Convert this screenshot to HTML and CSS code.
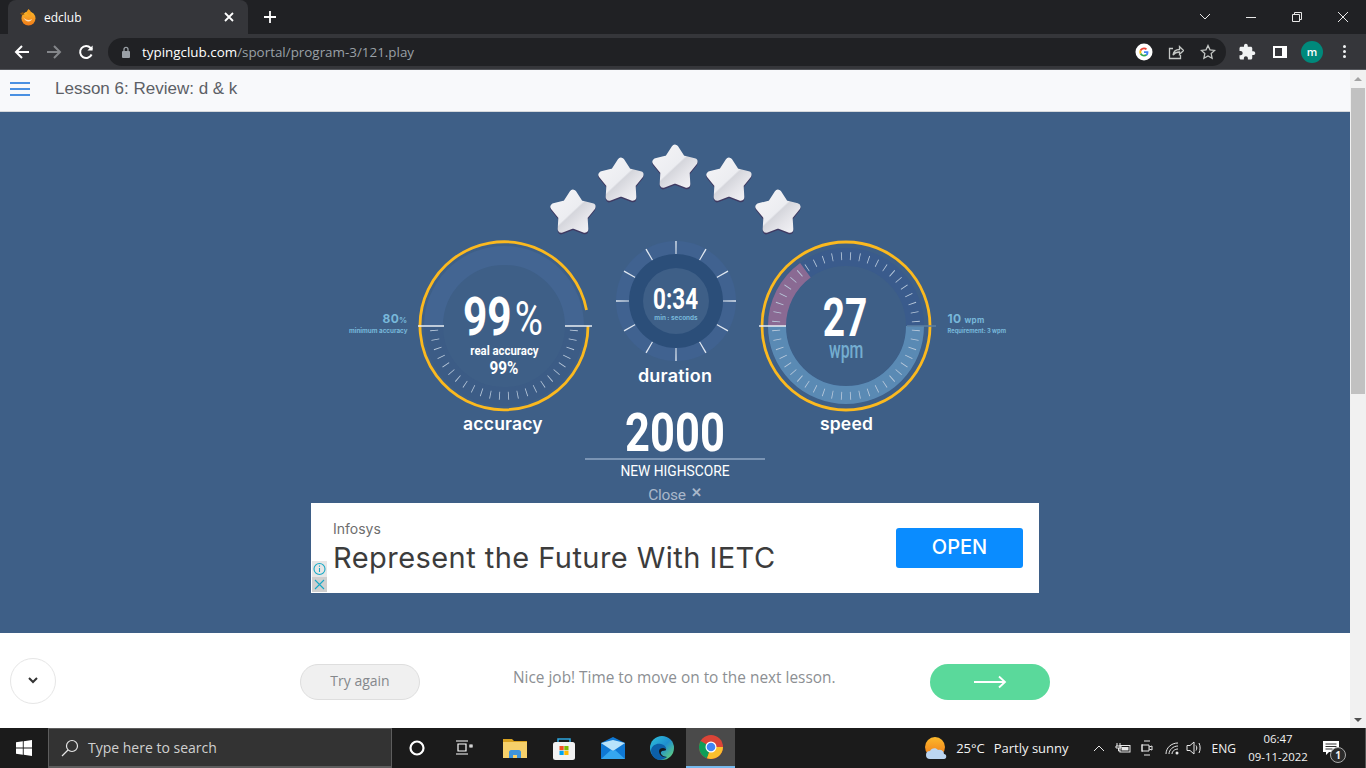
FILE: index.html
```html
<!DOCTYPE html>
<html>
  <head>
    <meta charset="utf-8" />
    <title>edclub</title>
    <link rel="stylesheet" href="styles.css">
  </head>
  <body>
    <svg class="defs" width="0" height="0">
      <defs>
        <linearGradient id="starFill" gradientUnits="userSpaceOnUse" x1="10" y1="10" x2="38" y2="40">
          <stop offset="0" stop-color="#f2f2f5" />
          <stop offset="0.46" stop-color="#ecedf1" />
          <stop offset="0.5" stop-color="#d5d6dc" />
          <stop offset="0.75" stop-color="#e4e4e9" />
          <stop offset="1" stop-color="#efeff3" />
        </linearGradient>
        <linearGradient id="edgeFill" x1="0" y1="0" x2="1" y2="1">
          <stop offset="0" stop-color="#2fc2d8" />
          <stop offset="0.5" stop-color="#1f8fd0" />
          <stop offset="1" stop-color="#6fdc6a" />
        </linearGradient>
        <linearGradient id="sunFill" x1="0" y1="0" x2="0" y2="1">
          <stop offset="0" stop-color="#fbb92c" />
          <stop offset="1" stop-color="#f07a18" />
        </linearGradient>
        <symbol id="star" viewBox="0 0 48 48">
          <polygon class="star-shadow" points="24,7.500 30.500,17.600 42.100,20.600 34.500,29.900 35.200,41.900 24,37.500 12.800,41.900 13.500,29.900 5.900,20.600 17.500,17.600" />
          <polygon class="star-face" points="24,6 30.500,16.100 42.100,19.100 34.500,28.400 35.200,40.400 24,36 12.800,40.400 13.500,28.400 5.900,19.100 17.500,16.100" />
        </symbol>
      </defs>
    </svg>

    <div class="tabstrip">
      <div class="tab">
        <svg class="favicon" width="18" height="18" viewBox="0 0 18 18">
          <circle cx="9.500" cy="10.500" r="7" fill="url(#sunFill)" />
          <path d="M9.500 1c2.500 2 3.500 4 2.500 7-1-1-3-1-4.500-3 0-1 1-3 2-4z" fill="#f7a11d" />
          <path d="M1 5.500l3-1.500 1.500 2.500-3 .5z" fill="#8a5512" />
          <path d="M4 9c2 3 6 4 9 2-1 3-6 4-9-2z" fill="#fff" opacity="0.75" />
        </svg>
        <span class="tab-title">edclub</span>
        <svg class="tab-close" width="10" height="10" viewBox="0 0 10 10"><path d="M1 1l8 8M9 1l-8 8" /></svg>
      </div>
      <svg class="new-tab" width="14" height="14" viewBox="0 0 14 14"><path d="M7 1v12M1 7h12" /></svg>
      <div class="window-controls">
        <svg width="12" height="8" viewBox="0 0 12 8"><path d="M1 1l5 5 5-5" /></svg>
        <svg width="12" height="12" viewBox="0 0 12 12"><path d="M1 6.500h10" /></svg>
        <svg width="12" height="12" viewBox="0 0 12 12"><path d="M1.500 3.500h7v7h-7zM3.500 3.500v-2h7v7h-2" /></svg>
        <svg width="12" height="12" viewBox="0 0 12 12"><path d="M1 1l10 10M11 1L1 11" /></svg>
      </div>
    </div>

    <div class="toolbar">
      <svg class="nav-icon" width="16" height="16" viewBox="0 0 16 16"><path d="M15 8H2M8 2L2 8l6 6" /></svg>
      <svg class="nav-icon nav-off" width="16" height="16" viewBox="0 0 16 16"><path d="M1 8h13M8 2l6 6-6 6" /></svg>
      <svg class="nav-icon" width="16" height="16" viewBox="0 0 16 16"><path d="M13.600 10.500A6 6 0 1 1 12.600 4L14 5.500" /><path class="nav-solid" d="M14.600 1.400v5.200H9.400z" /></svg>
      <div class="omnibox">
        <svg class="lock" width="10" height="12" viewBox="0 0 10 12"><rect x="1" y="5" width="8" height="7" rx="1" /><path d="M3 5V3.400a2 2 0 0 1 4 0V5" /></svg>
        <span class="url"><span class="url-host">typingclub.com</span>/sportal/program-3/121.play</span>
        <svg class="omni-g" width="18" height="18" viewBox="0 0 18 18">
          <circle cx="9" cy="9" r="8.500" fill="#fff" />
          <path d="M13.400 9.200c0-.4 0-.7-.1-1H9v1.900h2.500c-.1.600-.4 1.100-.9 1.400l1.500 1.100c.9-.8 1.300-2 1.300-3.400z" fill="#4285f4" />
          <path d="M9 13.500c1.200 0 2.300-.4 3.100-1.100l-1.500-1.100c-.4.300-1 .5-1.600.5-1.200 0-2.200-.8-2.600-1.900L4.800 11c.8 1.500 2.400 2.500 4.200 2.500z" fill="#34a853" />
          <path d="M6.400 9.900c-.2-.6-.2-1.200 0-1.800L4.800 6.900c-.6 1.300-.6 2.800 0 4.100z" fill="#fbbc05" />
          <path d="M9 6.300c.7 0 1.300.2 1.800.7l1.300-1.300C11.300 4.900 10.200 4.500 9 4.500c-1.800 0-3.400 1-4.200 2.400l1.600 1.200C6.800 7.100 7.800 6.300 9 6.300z" fill="#ea4335" />
        </svg>
        <svg class="omni-icon" width="16" height="16" viewBox="0 0 16 16"><path d="M5 4.500H1.500v10h11V11M5 11c.5-3.500 3-5.500 6.500-5.500V2.500l4 4-4 4V8C9 8 6.500 9 5 11z" /></svg>
        <svg class="omni-icon" width="16" height="16" viewBox="0 0 16 16"><path d="M8 1.500l2 4.300 4.700.6-3.500 3.200.9 4.700L8 12l-4.100 2.300.9-4.700L1.300 6.400 6 5.800z" /></svg>
      </div>
      <svg class="tool-icon" width="18" height="18" viewBox="0 0 24 24"><path d="M20.500 11H19V7c0-1.100-.9-2-2-2h-4V3.500C13 2.120 11.880 1 10.500 1S8 2.120 8 3.500V5H4c-1.100 0-1.990.9-1.990 2v3.800H3.500c1.490 0 2.700 1.210 2.700 2.700s-1.210 2.700-2.700 2.700H2V20c0 1.100.9 2 2 2h3.800v-1.500c0-1.490 1.210-2.700 2.700-2.700 1.490 0 2.700 1.210 2.700 2.700V22H17c1.100 0 2-.9 2-2v-4h1.500c1.380 0 2.500-1.120 2.500-2.500S21.880 11 20.500 11z" /></svg>
      <div class="side-panel"></div>
      <div class="avatar">m</div>
      <div class="menu-dots"><i></i><i></i><i></i></div>
    </div>

    <div class="window">
      <div class="page">
        <div class="lesson-bar">
          <div class="burger"><i></i><i></i><i></i></div>
          <span class="lesson-title">Lesson 6: Review: d &amp; k</span>
        </div>

        <div class="results">
          <div class="stars">
            <svg class="star star-low"><use href="#star" /></svg>
            <svg class="star star-mid"><use href="#star" /></svg>
            <svg class="star"><use href="#star" /></svg>
            <svg class="star star-mid"><use href="#star" /></svg>
            <svg class="star star-low"><use href="#star" /></svg>
          </div>

          <div class="gauges">
            <div class="gauge">
              <div class="dial">
                <svg class="dial-svg" width="171" height="171" viewBox="0 0 171 171">
                  <path class="band-accuracy-top" d="M14.500 85A70.500 70.500 0 0 1 155.500 85" />
                  <path class="band-accuracy-low" d="M155.500 85A70.500 70.500 0 0 1 14.500 85" />
                  <path class="ticks" pathLength="24" d="M155 85A70 70 0 0 1 15 85" />
                  <path class="rim" d="M167.500 69A84 84 0 1 0 169 85" />
                  <path class="mark" d="M-1 85H25M146 85H173" />
                </svg>
                <div class="note note-left">
                  <div class="note-big">80<small>%</small></div>
                  <div class="note-small">minimum accuracy</div>
                </div>
                <div class="readout readout-accuracy">
                  <div class="big-number">99<span class="percent">%</span></div>
                  <div class="real-label">real accuracy</div>
                  <div class="real-value">99%</div>
                </div>
              </div>
              <div class="gauge-label gauge-label-accuracy">accuracy</div>
            </div>

            <div class="gauge">
              <div class="dial dial-time">
                <svg class="dial-svg" width="124" height="122" viewBox="0 0 124 122">
                  <circle class="time-outer" cx="63" cy="60" r="60" />
                  <circle class="time-ticks" pathLength="12" cx="63" cy="60" r="53.500" />
                  <circle class="time-ring" cx="63" cy="60" r="47" />
                  <circle class="time-inner" cx="63" cy="60" r="33" />
                </svg>
                <div class="readout readout-time">
                  <div class="time-number">0:34</div>
                  <div class="time-unit">min : seconds</div>
                </div>
              </div>
              <div class="gauge-label gauge-label-time">duration</div>
              <div class="highscore">
                <div class="highscore-box"><div class="highscore-number">2000</div></div>
                <div class="highscore-label">NEW HIGHSCORE</div>
              </div>
              <div class="close-row"><span class="close-text">Close</span><span class="close-x">✕</span></div>
            </div>

            <div class="gauge">
              <div class="dial">
                <svg class="dial-svg" width="171" height="171" viewBox="0 0 171 171">
                  <circle class="band-speed" cx="85" cy="85" r="69" />
                  <path class="band-speed-low" d="M154 85A69 69 0 0 1 16 85" />
                  <path class="band-speed-red" d="M16 85A69 69 0 0 1 44.400 29.200" />
                  <circle class="ticks" pathLength="48" cx="85" cy="85" r="70" />
                  <circle class="rim" cx="85" cy="85" r="84" />
                  <path class="mark" d="M-2 85H25" />
                  <path class="mark mark-faint" d="M146 85H175" />
                </svg>
                <div class="readout readout-speed">
                  <div class="speed-number">27</div>
                  <div class="speed-unit">wpm</div>
                </div>
                <div class="note note-right">
                  <div class="note-big">10 <small>wpm</small></div>
                  <div class="note-small">Requirement: 3 wpm</div>
                </div>
              </div>
              <div class="gauge-label gauge-label-speed">speed</div>
            </div>
          </div>

          <div class="ad">
            <div class="ad-copy">
              <div class="ad-brand">Infosys</div>
              <div class="ad-headline">Represent the Future With IETC</div>
            </div>
            <div class="ad-button">OPEN</div>
            <div class="ad-badges">
              <svg width="15" height="16" viewBox="0 0 15 16"><circle cx="7.500" cy="8" r="5.500" /><path d="M7.500 7v4M7.500 4.500v1.200" /></svg>
              <svg class="ad-badge-x" width="15" height="15" viewBox="0 0 15 15"><path d="M3 3l9 9M12 3l-9 9" /></svg>
            </div>
          </div>
        </div>

        <div class="actions">
          <div class="collapse">
            <svg width="10" height="7" viewBox="0 0 10 7"><path d="M1 1l4 4 4-4" /></svg>
          </div>
          <div class="try-again">Try again</div>
          <div class="message">Nice job! Time to move on to the next lesson.</div>
          <div class="next">
            <svg width="34" height="14" viewBox="0 0 34 14"><path d="M1 7h31M26 1.500L32 7l-6 5.500" /></svg>
          </div>
        </div>
      </div>

      <div class="scrollbar">
        <div class="scroll-up"></div>
        <div class="scroll-thumb"></div>
        <div class="scroll-down"></div>
      </div>
    </div>

    <div class="taskbar">
      <div class="start">
        <svg width="16" height="16" viewBox="0 0 16 16"><path d="M0 2.300L6.800 1.300V7.600H0zM7.700 1.200L16 0V7.600H7.700zM0 8.400H6.800V14.700L0 13.700zM7.700 8.400H16V16L7.700 14.800z" /></svg>
      </div>
      <div class="search">
        <svg width="20" height="20" viewBox="0 0 20 20"><circle cx="12" cy="8" r="5.500" /><path d="M8 12l-6 6" /></svg>
        <span>Type here to search</span>
      </div>
      <div class="task-item">
        <svg width="18" height="18" viewBox="0 0 18 18"><circle cx="9" cy="9" r="6.500" fill="none" stroke="#fff" stroke-width="2.200" /></svg>
      </div>
      <div class="task-item">
        <svg class="task-view" width="18" height="16" viewBox="0 0 18 16"><path d="M1 1h12M3 4h8v7H3zM1 14h12M15 5h2v2h-2z" /></svg>
      </div>
      <div class="task-item">
        <svg width="24" height="20" viewBox="0 0 24 20">
          <path d="M0 1h9l2 2h13v3H0z" fill="#d9a220" />
          <path d="M0 4h24v16H0z" fill="#f6d06a" />
          <path d="M6 20v-6c0-1 1-2 2-2h8c1 0 2 1 2 2v6h-4v-3h-4v3z" fill="#3f94dc" />
        </svg>
      </div>
      <div class="task-item">
        <svg width="24" height="24" viewBox="0 0 24 24">
          <path d="M6 7V3h12v4" fill="none" stroke="#2ea7e0" stroke-width="1.500" />
          <rect x="1" y="6" width="22" height="18" rx="2.500" fill="#f2f2f2" />
          <rect x="7.500" y="10" width="4.200" height="4.200" fill="#f25022" />
          <rect x="12.300" y="10" width="4.200" height="4.200" fill="#7fba00" />
          <rect x="7.500" y="14.800" width="4.200" height="4.200" fill="#00a4ef" />
          <rect x="12.300" y="14.800" width="4.200" height="4.200" fill="#ffb900" />
        </svg>
      </div>
      <div class="task-item">
        <svg width="24" height="22" viewBox="0 0 24 22">
          <path d="M0 6l12-6 12 6v16H0z" fill="#0f78d4" />
          <path d="M0 6l12 8 12-8-12-3z" fill="#b9e3fb" />
          <path d="M0 22l10-9 2 1 2-1 10 9z" fill="#35a6ef" />
        </svg>
      </div>
      <div class="task-item">
        <svg width="24" height="24" viewBox="0 0 24 24">
          <circle cx="12" cy="12" r="12" fill="url(#edgeFill)" />
          <path d="M1 14c1-5 6-7 10-6 4 1 6 4 5 6-1 1-4 0-5 2s2 5 6 5c-2 2-5 3-8 3-5-1-8-5-8-10z" fill="#0c5fa8" />
          <path d="M9 15c0-2 2-3 4-3s3 1 3 2c-1 1-4 0-5 2s2 5 6 5c-4 1-8-2-8-6z" fill="#18181a" />
        </svg>
      </div>
      <div class="task-item task-active">
        <svg width="24" height="24" viewBox="0 0 24 24">
          <circle cx="12" cy="12" r="12" fill="#db4437" />
          <path d="M12 12L1.600 6A12 12 0 0 0 8 23.300z" fill="#0f9d58" />
          <path d="M12 12h12A12 12 0 0 1 8 23.300z" fill="#fbc02d" />
          <circle cx="12" cy="12" r="5.500" fill="#fff" />
          <circle cx="12" cy="12" r="4.300" fill="#4285f4" />
        </svg>
      </div>

      <div class="tray">
        <svg class="weather" width="24" height="24" viewBox="0 0 24 24">
          <circle cx="11" cy="11" r="10" fill="url(#sunFill)" />
          <path d="M6 23a4 4 0 0 1 0-8c1-3 6-4 8-1 3-1 6 1 6 4 3 0 3 5 0 5z" fill="#bcd5f0" />
        </svg>
        <span class="tray-temp">25°C</span>
        <span class="tray-forecast">Partly sunny</span>
        <svg class="tray-chevron" width="12" height="8" viewBox="0 0 12 8"><path d="M1 7l5-5 5 5" /></svg>
        <svg class="tray-battery" width="16" height="12" viewBox="0 0 16 12"><path d="M2 1v3M5 1v3M1 4h5v2H1zM3.500 6v3H5" /><rect x="5" y="3.500" width="10" height="6.500" /><rect class="tray-fill" x="6.500" y="5" width="7" height="3.500" /></svg>
        <svg class="tray-camera" width="12" height="16" viewBox="0 0 12 16"><path d="M3 1h6M3 15h6M1 4v8M1 5h7v6H1zM8 7l3-1v4l-3-1" /></svg>
        <svg class="tray-wifi" width="16" height="16" viewBox="0 0 16 16"><path d="M1 14C1 8 6 3 13 3M4 14c0-4 4-8 9-8M7 14c0-3 3-5 6-5" /><circle cx="12" cy="13" r="1.500" /></svg>
        <svg class="tray-volume" width="16" height="16" viewBox="0 0 16 16"><path d="M1 5.500h3l4-3.500v12l-4-3.500H1zM10 5.500c1 1.500 1 3.500 0 5M13 3c1.500 3 1.500 7 0 10" /></svg>
        <span class="tray-lang">ENG</span>
        <div class="tray-clock">
          <div>06:47</div>
          <div>09-11-2022</div>
        </div>
        <div class="tray-notify">
          <svg width="16" height="15" viewBox="0 0 16 15"><path d="M0 0h16v11H6l-3 3v-3H0z" fill="#fff" /><path d="M2.500 3h11M2.500 5.500h11M2.500 8h7" stroke="#333" fill="none" /></svg>
          <span class="notify-count">1</span>
        </div>
      </div>
    </div>
  </body>
</html>
```

FILE: styles.css
```css
:root {
  --results-bg: #3e5f87;
  --rim: #fbb91f;
  --note: #78b8da;
  --chrome-dark: #202124;
  --chrome-mid: #35363a;
  --narrow: "Roboto", sans-serif;
  --ui: "Open Sans", "Noto Sans", sans-serif;
  --rounded: "Inter", "Open Sans", sans-serif;
}

* {
  box-sizing: border-box;
}
body {
  width: 1366px;
  height: 768px;
  margin: 0;
  overflow: hidden;
  display: flex;
  flex-direction: column;
  font-family: var(--ui);
  background: #fff;
}
.defs {
  position: absolute;
}

/* browser chrome */
.tabstrip {
  height: 34px;
  flex: none;
  display: flex;
  align-items: center;
  padding-left: 8px;
  background: var(--chrome-dark);
}
.tab {
  width: 240px;
  height: 34px;
  display: flex;
  align-items: center;
  padding: 0 14px 0 11px;
  border-radius: 8px 8px 0 0;
  background: var(--chrome-mid);
  color: #fff;
  font-size: 12px;
}
.tab-title {
  margin-left: 7px;
  flex: 1;
}
.tab-close path,
.new-tab path {
  stroke: #fff;
  stroke-width: 1.800;
  fill: none;
}
.new-tab {
  margin-left: 15px;
}
.window-controls {
  margin-left: auto;
  display: flex;
  align-items: center;
  gap: 34px;
  padding-right: 17px;
}
.window-controls svg {
  overflow: visible;
}
.window-controls path {
  stroke: #e8e8e8;
  fill: none;
}
.toolbar {
  height: 36px;
  flex: none;
  display: flex;
  align-items: center;
  padding: 0 0 0 14px;
  background: var(--chrome-mid);
  border-bottom: 1px solid #55575c;
}
.nav-icon {
  margin-right: 16px;
}
.nav-icon path {
  stroke: #fff;
  stroke-width: 2;
  fill: none;
}
.nav-icon path.nav-solid {
  fill: #fff;
  stroke: none;
}
.nav-icon.nav-off path {
  stroke: #84868a;
}
.omnibox {
  width: 1118px;
  height: 28px;
  margin-left: -2px;
  display: flex;
  align-items: center;
  padding: 0 10px 0 13px;
  border-radius: 14px;
  background: var(--chrome-dark);
}
.lock rect {
  fill: #9aa0a6;
}
.lock path {
  fill: none;
  stroke: #9aa0a6;
  stroke-width: 1.300;
}
.url {
  margin-left: 11px;
  flex: 1;
  font-size: 13.400px;
  color: #9aa0a6;
}
.url-host {
  color: #fff;
}
.omni-g {
  margin-right: 15px;
}
.omni-icon + .omni-icon {
  margin-left: 16px;
}
.omni-icon path {
  fill: none;
  stroke: #c4c7c5;
  stroke-width: 1.300;
}
.tool-icon {
  margin-left: 12px;
}
.tool-icon path {
  fill: #f1f3f4;
}
.side-panel {
  width: 14px;
  height: 12px;
  margin-left: 17px;
  border: 2px solid #fff;
  border-right-width: 5px;
  background: var(--chrome-mid);
}
.avatar {
  width: 22px;
  height: 22px;
  margin-left: 14px;
  border-radius: 50%;
  background: #00897b;
  color: #fff;
  font-size: 11px;
  font-weight: 600;
  line-height: 21px;
  text-align: center;
}
.menu-dots {
  margin-left: 20px;
  display: flex;
  flex-direction: column;
  gap: 2px;
}
.menu-dots i {
  width: 3px;
  height: 3px;
  border-radius: 50%;
  background: #f1f3f4;
}

/* page */
.window {
  flex: 1;
  display: flex;
  min-height: 0;
}
.page {
  width: 1350px;
  display: flex;
  flex-direction: column;
}
.lesson-bar {
  height: 42px;
  flex: none;
  display: flex;
  align-items: center;
  padding: 0 0 4px 10px;
  background: #f8f9fb;
  border-bottom: 1px solid #d5d8dc;
}
.burger {
  width: 20px;
  display: flex;
  flex-direction: column;
  gap: 4px;
}
.burger i {
  height: 2px;
  background: #4a90e2;
}
.lesson-title {
  margin-left: 25px;
  font-family: "Liberation Sans", sans-serif;
  font-size: 17px;
  color: #5c6066;
}
.results {
  flex: 1;
  display: flex;
  flex-direction: column;
  align-items: center;
  padding-top: 30px;
  background: var(--results-bg);
}
.stars {
  display: flex;
  gap: 4px;
  height: 95px;
}
.star {
  width: 50px;
  height: 50px;
}
.star-low {
  margin: 45px -5.500px 0;
}
.star-mid {
  margin-top: 13px;
}
.star-shadow {
  fill: #3f3a62;
  stroke: #3f3a62;
  stroke-width: 7;
  stroke-linejoin: round;
}
.star-face {
  fill: url(#starFill);
  stroke: url(#starFill);
  stroke-width: 7;
  stroke-linejoin: round;
}
.gauges {
  display: flex;
  margin-top: 4px;
}
.gauge {
  width: 171px;
  display: flex;
  flex-direction: column;
  align-items: center;
}
.dial {
  position: relative;
  width: 171px;
  height: 171px;
}
.dial-time {
  width: 124px;
  height: 122px;
}
.dial-svg {
  display: block;
  overflow: visible;
}
.band-accuracy-top {
  fill: none;
  stroke: #436592;
  stroke-width: 19;
}
.band-accuracy-low {
  fill: none;
  stroke: #3c5c86;
  stroke-width: 19;
}
.ticks {
  fill: none;
  stroke: #b9c9db;
  stroke-width: 8;
  stroke-dasharray: 0.09 0.91;
  stroke-dashoffset: -0.455;
}
.rim {
  fill: none;
  stroke: var(--rim);
  stroke-width: 2.800;
}
.mark {
  fill: none;
  stroke: #e9eef3;
  stroke-width: 1.500;
}
.mark-faint {
  stroke: #5b7fa3;
}
.band-speed {
  fill: none;
  stroke: #3a5b8c;
  stroke-width: 18;
}
.band-speed-low {
  fill: none;
  stroke: #5a8ab4;
  stroke-width: 18;
}
.band-speed-red {
  fill: none;
  stroke: #8a6a93;
  stroke-width: 18;
}
.time-outer {
  fill: #406290;
}
.time-ticks {
  fill: none;
  stroke: #dfe7f0;
  stroke-width: 13;
  stroke-dasharray: 0.045 0.955;
  stroke-dashoffset: 0.0225;
}
.time-ring {
  fill: #2b4e79;
}
.time-inner {
  fill: #3e5f87;
}
.readout {
  position: absolute;
  left: 0;
  right: 0;
  display: flex;
  flex-direction: column;
  align-items: center;
  color: #fff;
  font-family: var(--narrow);
}
.readout-accuracy {
  top: 52px;
}
.big-number {
  margin-right: 2px;
  font-size: 53px;
  font-weight: 700;
  line-height: 48px;
  transform: scaleX(0.8);
}
.percent {
  margin-left: 4px;
  font-size: 48px;
  font-weight: 400;
}
.real-label {
  margin-top: 1px;
  font-size: 12.500px;
  font-weight: 700;
  line-height: 14px;
  transform: scaleX(0.91);
}
.real-value {
  font-size: 18px;
  font-weight: 700;
  line-height: 20px;
  transform: scaleX(0.85);
}
.readout-speed {
  top: 49px;
}
.speed-number {
  margin-right: 2px;
  font-size: 54px;
  font-weight: 700;
  line-height: 56px;
  transform: scaleX(0.72);
}
.speed-unit {
  margin-top: -8px;
  font-size: 24px;
  font-weight: 500;
  line-height: 24px;
  color: #74add0;
  transform: scaleX(0.66);
}
.readout-time {
  top: 43px;
  padding-left: 2px;
}
.time-number {
  font-size: 29.500px;
  font-weight: 700;
  line-height: 30px;
  transform: scaleX(0.76);
}
.time-unit {
  font-family: var(--rounded);
  font-size: 6.400px;
  font-weight: 700;
  line-height: 8px;
  color: var(--note);
}
.note {
  position: absolute;
  top: 71px;
  font-family: var(--rounded);
  color: var(--note);
  white-space: nowrap;
}
.note-left {
  right: calc(100% + 11px);
  text-align: right;
}
.note-right {
  left: calc(100% + 16px);
}
.note-big {
  font-size: 12px;
  font-weight: 700;
  line-height: 14px;
  letter-spacing: 0.3px;
}
.note-big small {
  font-size: 8px;
}
.note-small {
  font-size: 6.300px;
  font-weight: 700;
  line-height: 8px;
}
.note-right .note-small {
  font-size: 5.800px;
}
.gauge-label {
  height: 20px;
  color: #fff;
  font-family: var(--rounded);
  font-size: 17.500px;
  font-weight: 600;
  line-height: 20px;
  letter-spacing: 0.2px;
}
.gauge-label-accuracy {
  margin: 2px 2px 0 0;
}
.gauge-label-speed {
  margin: 2px 0 0 1px;
}
.gauge-label-time {
  margin-top: 3px;
  font-size: 18px;
}
.highscore {
  width: 180px;
  margin: 22px -5px 0;
  flex: none;
  color: #fff;
  text-align: center;
  font-family: var(--narrow);
}
.highscore-box {
  height: 52px;
  border-bottom: 2px solid #7a94b4;
}
.highscore-number {
  font-size: 53px;
  font-weight: 700;
  line-height: 50px;
  transform: scaleX(0.82);
}
.highscore-label {
  font-size: 15px;
  line-height: 16px;
  margin-top: 3px;
  transform: scaleX(0.92);
}
.close-row {
  height: 16px;
  margin-top: 8px;
  display: flex;
  align-items: center;
  font-family: var(--narrow);
  font-size: 15.500px;
  line-height: 16px;
  color: #a9b7ca;
}
.close-text {
  letter-spacing: -0.3px;
}
.close-x {
  margin: -4px 0 0 5px;
  font-size: 13px;
  font-weight: 700;
}

/* ad */
.ad {
  position: relative;
  width: 728px;
  height: 90px;
  flex: none;
  display: flex;
  align-items: center;
  justify-content: space-between;
  padding: 0 16px 0 22px;
  background: #fff;
}
.ad-brand {
  font-family: var(--rounded);
  font-size: 14px;
  line-height: 18px;
  color: #6d6d6d;
}
.ad-headline {
  padding-top: 1px;
  font-family: var(--rounded);
  font-size: 29px;
  line-height: 38px;
  letter-spacing: 0.45px;
  color: #3c3c3c;
}
.ad-button {
  width: 127px;
  height: 40px;
  border-radius: 3px;
  background: #0a8cff;
  color: #fff;
  font-family: var(--rounded);
  font-size: 20px;
  font-weight: 500;
  line-height: 38px;
  text-align: center;
}
.ad-badges {
  position: absolute;
  left: 1px;
  bottom: 1px;
  display: flex;
  flex-direction: column;
}
.ad-badges svg {
  display: block;
  background: #e6e6e6;
}
.ad-badges circle,
.ad-badges path {
  fill: none;
  stroke: #17a9c6;
  stroke-width: 1.100;
}
.ad-badges .ad-badge-x {
  background: #cfcfcf;
}

/* bottom action row */
.actions {
  height: 95px;
  flex: none;
  display: flex;
  align-items: center;
  padding: 0 0 0 10px;
  background: #fff;
}
.collapse {
  width: 46px;
  height: 46px;
  display: flex;
  align-items: center;
  justify-content: center;
  border: 1px solid #e6e6e6;
  border-radius: 50%;
}
.collapse path {
  fill: none;
  stroke: #333;
  stroke-width: 2;
}
.try-again {
  width: 120px;
  height: 36px;
  margin: 2px 0 0 244px;
  border: 1px solid #dedede;
  border-radius: 18px;
  background: #f0f0f0;
  color: #85888c;
  font-family: var(--ui);
  font-size: 14px;
  line-height: 31px;
  text-align: center;
}
.message {
  width: 324px;
  margin: -6px 0 0 93px;
  font-family: var(--ui);
  font-size: 15.400px;
  color: #8c8f93;
  white-space: nowrap;
  line-height: 30px;
}
.next {
  width: 120px;
  height: 36px;
  margin: 2px 0 0 93px;
  display: flex;
  align-items: center;
  justify-content: center;
  border-radius: 18px;
  background: #5ad99b;
}
.next path {
  fill: none;
  stroke: #fff;
  stroke-width: 1.800;
}

/* scrollbar */
.scrollbar {
  width: 16px;
  display: flex;
  flex-direction: column;
  background: #f1f1f1;
}
.scroll-up {
  width: 0;
  height: 0;
  margin: 7px 0 0 4px;
  border: 4px solid transparent;
  border-top: 0;
  border-bottom: 4px solid #a3a3a3;
}
.scroll-thumb {
  width: 14px;
  height: 306px;
  margin: 7px 0 0 1px;
  background: #c1c1c1;
}
.scroll-down {
  width: 0;
  height: 0;
  margin: auto 0 6px 4px;
  border: 4px solid transparent;
  border-bottom: 0;
  border-top: 4px solid #505050;
}

/* windows taskbar */
.taskbar {
  height: 40px;
  flex: none;
  display: flex;
  align-items: center;
  background: #1b1b1b;
  color: #fff;
}
.start {
  width: 48px;
  display: flex;
  justify-content: center;
}
.start path {
  fill: #fff;
}
.search {
  width: 344px;
  height: 40px;
  display: flex;
  align-items: center;
  padding-left: 11px;
  border: 1px solid #5d5d5d;
  border-bottom-width: 2px;
  background: #333;
  color: #d0d0d0;
  font-size: 14px;
}
.search svg {
  margin-right: 8px;
}
.search circle,
.search path {
  fill: none;
  stroke: #e6e6e6;
  stroke-width: 1.200;
}
.task-item {
  width: 49px;
  height: 40px;
  display: flex;
  align-items: center;
  justify-content: center;
}
.task-view {
  margin-right: 4px;
}
.task-view path {
  fill: none;
  stroke: #fff;
  stroke-width: 1.200;
}
.task-active {
  background: #4a4a4a;
  border-bottom: 2px solid #76b9ed;
}
.tray {
  margin-left: auto;
  display: flex;
  align-items: center;
  height: 40px;
  padding-right: 2px;
  border-right: 1px solid #555;
  font-size: 13px;
  color: #f2f2f2;
}
.tray svg {
  flex: none;
}
.tray-temp {
  margin-left: 8px;
}
.tray-forecast {
  margin-left: 9px;
}
.tray-chevron {
  margin-left: 24px;
}
.tray-chevron path,
.tray-battery path,
.tray-battery rect,
.tray-camera path,
.tray-wifi path,
.tray-volume path {
  fill: none;
  stroke: #e8e8e8;
}
.tray-battery rect.tray-fill,
.tray-wifi circle {
  fill: #e8e8e8;
  stroke: none;
}
.tray-battery {
  margin-left: 10px;
}
.tray-camera {
  margin-left: 10px;
}
.tray-wifi {
  margin-left: 12px;
}
.tray-volume {
  margin-left: 5px;
}
.tray-lang {
  margin-left: 10px;
  font-size: 12px;
}
.tray-clock {
  width: 70px;
  margin-left: 7px;
  font-size: 11.400px;
  line-height: 18px;
  text-align: center;
}
.tray-notify {
  position: relative;
  width: 16px;
  height: 15px;
  margin: 0 24px 0 10px;
}
.tray-notify svg {
  display: block;
}
.notify-count {
  position: absolute;
  left: 7px;
  top: 6px;
  width: 16px;
  height: 16px;
  border: 1px solid #aaa;
  border-radius: 50%;
  background: #2b2b2b;
  font-size: 10px;
  font-weight: 700;
  line-height: 14px;
  text-align: center;
}
```
